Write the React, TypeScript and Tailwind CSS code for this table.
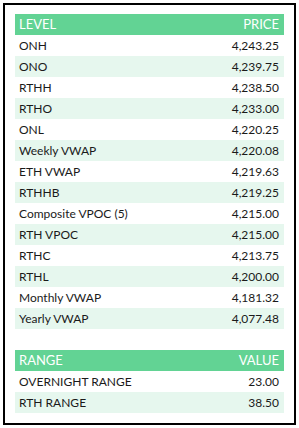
const levels: [string, string][] = [
  ["ONH", "4,243.25"],
  ["ONO", "4,239.75"],
  ["RTHH", "4,238.50"],
  ["RTHO", "4,233.00"],
  ["ONL", "4,220.25"],
  ["Weekly VWAP", "4,220.08"],
  ["ETH VWAP", "4,219.63"],
  ["RTHHB", "4,219.25"],
  ["Composite VPOC (5)", "4,215.00"],
  ["RTH VPOC", "4,215.00"],
  ["RTHC", "4,213.75"],
  ["RTHL", "4,200.00"],
  ["Monthly VWAP", "4,181.32"],
  ["Yearly VWAP", "4,077.48"],
];

const ranges: [string, string][] = [
  ["OVERNIGHT RANGE", "23.00"],
  ["RTH RANGE", "38.50"],
];

function Table({ head, rows }: { head: [string, string]; rows: [string, string][] }) {
  return (
    <div className="flex flex-col">
      <div className="flex h-[21px] items-center justify-between bg-[#62d394] pl-[4px] pr-[5px] text-[13px] text-white">
        <span>{head[0]}</span>
        <span>{head[1]}</span>
      </div>
      {rows.map(([name, value], i) => (
        <div
          key={name}
          className={
            "flex h-[21px] items-center justify-between pl-[4px] pr-[5px] text-[12px] text-[#1a1a1a] " +
            (i % 2 === 1 ? "bg-[#e6f7ee]" : "bg-white")
          }
        >
          <span>{name}</span>
          <span>{value}</span>
        </div>
      ))}
    </div>
  );
}

export default function App() {
  return (
    <div className="h-[428px] w-[299px] bg-white p-[3px] font-['Lato',sans-serif]">
      <div className="flex h-[422px] w-[293px] flex-col gap-[21px] border-2 border-black px-[10px] pt-[9px]">
        <Table head={["LEVEL", "PRICE"]} rows={levels} />
        <Table head={["RANGE", "VALUE"]} rows={ranges} />
      </div>
    </div>
  );
}
